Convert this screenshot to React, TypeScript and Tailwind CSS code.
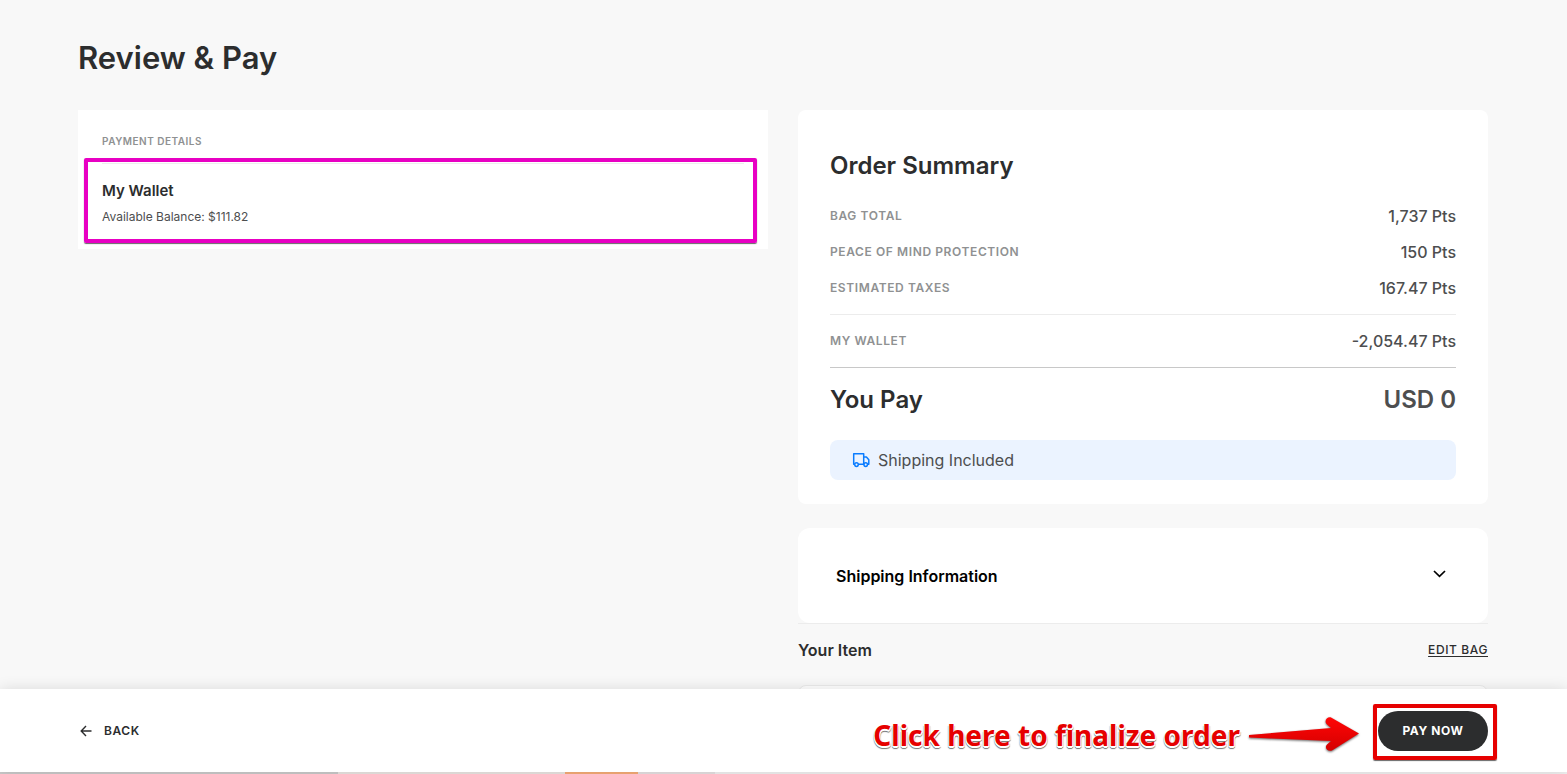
import { useState } from 'react';
import { clsx } from 'clsx';

type Line = { label: string; value: string };

const charges: Line[] = [
  { label: 'Bag total', value: '1,737 Pts' },
  { label: 'Peace of mind protection', value: '150 Pts' },
  { label: 'Estimated taxes', value: '167.47 Pts' },
];

function SummaryRow({ label, value }: Line) {
  return (
    <div className="flex h-9 items-center justify-between">
      <dt className="text-xs font-semibold uppercase tracking-wider text-[#8f9192]">{label}</dt>
      <dd className="text-base font-medium text-[#4d4e4f]">{value}</dd>
    </div>
  );
}

function TruckIcon() {
  return (
    <svg width="18" height="16" viewBox="0 0 18 16" fill="none" stroke="#0a7cff" strokeWidth="1.5" aria-hidden="true">
      <path d="M2.6 12.2H1.7V1.8h10v10.4H6.4M11.700 4.900h2.700l2.400 2.800v4.500h-1.200M11.200 12.200h.6" strokeLinejoin="round" />
      <circle cx="4.5" cy="12.6" r="1.8" />
      <circle cx="13.7" cy="12.6" r="1.8" />
    </svg>
  );
}

function BackArrow() {
  return (
    <svg width="12" height="12" viewBox="0 0 12 12" fill="none" stroke="#2c2d2e" strokeWidth="1.4" aria-hidden="true">
      <path d="M11.5 6H1.2M6 1 1.2 6 6 11" />
    </svg>
  );
}

function PointerArrow() {
  return (
    <svg width="114" height="40" viewBox="0 0 114 40" className="drop-shadow-[0_1px_1px_rgba(0,0,0,0.6)]" aria-hidden="true">
      <defs>
        <linearGradient id="pointer" x1="0" y1="0" x2="0" y2="1">
          <stop offset="0" stopColor="#ff0606" />
          <stop offset="1" stopColor="#d40000" />
        </linearGradient>
      </defs>
      <path
        d="M1 20 83 13 79 9.500 C75.500 6 79 1.500 83 2.500 L111 18.500 84 35.500 C79.500 37 76 32.500 79 29.500 L83 26 1 22.500Z"
        fill="url(#pointer)"
      />
    </svg>
  );
}

function PaymentDetails() {
  return (
    <section className="bg-white px-6 pt-[25px] pb-1.5">
      <h2 className="text-[10px] leading-3 font-semibold uppercase tracking-wider text-[#8f9192]">Payment details</h2>
      <div className="relative mt-4 border-t border-[#ededed] pt-[15px] pb-4">
        <h3 className="text-[15px] leading-6 font-semibold text-[#2c2d2e]">My Wallet</h3>
        <p className="mt-1 text-xs leading-5 text-[#4d4e4f]">Available Balance: $111.82</p>
        <div className="pointer-events-none absolute -top-1.5 -right-[13px] bottom-0 -left-4.5 rounded-xs border-4 border-[#e800c3] shadow-[0_1px_1px_#666]" />
      </div>
    </section>
  );
}

function OrderSummary() {
  return (
    <section className="rounded-lg bg-white px-8 pt-10 pb-6">
      <h2 className="text-2xl leading-8 font-semibold text-[#2c2d2e]">Order Summary</h2>
      <dl>
        <div className="mt-4 border-b border-[#ececec] pb-2">
          {charges.map((line) => (
            <SummaryRow key={line.label} {...line} />
          ))}
        </div>
        <div className="border-b border-[#c8c8c8] py-2">
          <SummaryRow label="My wallet" value="-2,054.47 Pts" />
        </div>
        <div className="mt-3 flex h-10 items-center justify-between text-2xl font-semibold">
          <dt className="text-[#2c2d2e]">You Pay</dt>
          <dd className="text-[#4d4e4f]">USD 0</dd>
        </div>
      </dl>
      <p className="mt-5 flex h-10 items-center gap-2 rounded-lg bg-[#ebf3ff] px-[22px] text-[#4d4e4f]">
        <TruckIcon />
        Shipping Included
      </p>
    </section>
  );
}

function ShippingInfo() {
  const [open, setOpen] = useState(false);

  return (
    <section className="mt-6 border-b border-[#ececec]">
      <button
        type="button"
        aria-expanded={open}
        onClick={() => setOpen(!open)}
        className="flex h-[95px] w-full items-center justify-between rounded-xl bg-white pr-10 pl-[38px] text-base font-semibold text-black"
      >
        Shipping Information
        <svg
          width="16"
          height="16"
          viewBox="0 0 16 16"
          fill="none"
          stroke="currentColor"
          strokeWidth="1.7"
          className={clsx(open && 'rotate-180')}
          aria-hidden="true"
        >
          <path d="M2 3 7.5 8.300 13 3" />
        </svg>
      </button>
    </section>
  );
}

// page content showing through under the footer
function BottomStrip() {
  return (
    <div className="flex h-0.5 shrink-0 bg-[#f0f0f0]">
      <div className="w-[338px] bg-[#c9c9c9]" />
      <div className="w-[227px] bg-[#e8e4e1]" />
      <div className="w-[73px] bg-[#f5ab76]" />
      <div className="w-[77px] bg-[#e4e0e1]" />
    </div>
  );
}

export default function App() {
  return (
    <div className="flex h-screen flex-col overflow-hidden bg-[#f8f8f8] font-['Inter','Roboto',sans-serif]">
      <main className="min-h-0 flex-1 overflow-hidden pt-10 pr-[79px] pl-[78px]">
        <h1 className="text-[31px] leading-9 font-semibold text-[#2c2d2e]">Review &amp; Pay</h1>
        <div className="mt-[34px] grid grid-cols-2 items-start gap-[30px]">
          <PaymentDetails />
          <div>
            <OrderSummary />
            <ShippingInfo />
            <div className="flex h-[61px] items-start justify-between pt-3.5">
              <h2 className="text-base leading-6 font-semibold text-[#2c2d2e]">Your Item</h2>
              <a href="#bag" className="text-xs leading-6 font-medium uppercase tracking-wider text-[#2c2d2e] underline underline-offset-2">
                Edit bag
              </a>
            </div>
            <div className="h-40 rounded-lg border border-[#ececec] bg-white" />
          </div>
        </div>
      </main>

      <footer className="relative flex h-[83px] shrink-0 items-center justify-between bg-white pr-[79px] pl-20 shadow-[0_0_14px_rgba(0,0,0,0.12)]">
        <button type="button" className="flex items-center gap-3 text-xs font-semibold uppercase tracking-wider text-[#2c2d2e]">
          <BackArrow />
          Back
        </button>
        <div className="flex items-center gap-4">
          <p className="flex items-center gap-2 pt-2 font-['Noto_Sans','Open_Sans',sans-serif] text-[28px] leading-8 font-bold text-[#e60000] [text-shadow:0_1px_0_#fff,1px_1px_0_#fff,-1px_1px_0_#fff,0_2px_0_#fff,1px_2px_1px_#777,-1px_2px_1px_#777,0_3px_1px_#777]">
            Click here to finalize order
            <PointerArrow />
          </p>
          <div className="relative">
            <button type="button" className="h-10 w-[110px] rounded-full bg-[#2c2d2e] text-xs font-bold uppercase tracking-wider text-white">
              Pay now
            </button>
            <div className="pointer-events-none absolute -top-[7px] -right-[9px] -bottom-[9px] -left-[5px] rounded-xs border-4 border-[#e60000] shadow-[0_1px_1px_#666]" />
          </div>
        </div>
      </footer>
      <BottomStrip />
    </div>
  );
}
